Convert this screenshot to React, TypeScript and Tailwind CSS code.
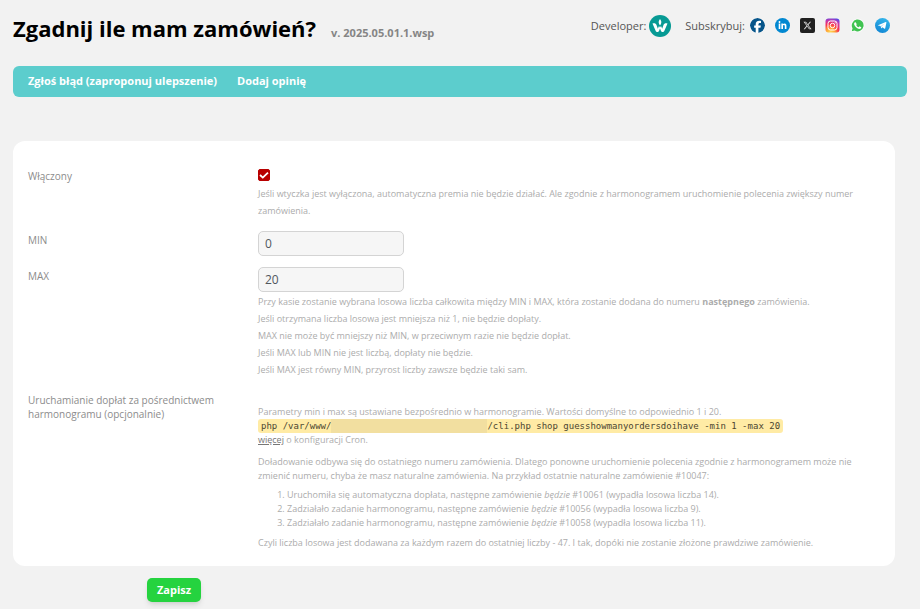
import type { ReactNode } from "react";
import { FaFacebook, FaLinkedinIn, FaXTwitter } from "react-icons/fa6";

function DeveloperLogo() {
  return (
    <svg viewBox="0 0 44 44" className="h-[22px] w-[22px]" aria-hidden="true">
      <circle cx="22" cy="22" r="22" fill="#079a94" />
      <path d="M7 17c4-1 7 0 8 3l4 11c-1 3-5 4-6 0z" fill="#fff" />
      <path d="M37 17c-4-1-7 0-8 3l-4 11c1 3 5 4 6 0z" fill="#fff" />
      <path d="M15 33l5-11 2 3 2-3 5 11c-2 2-4 1-5-1l-2-5-2 5c-1 2-3 3-5 1z" fill="#fff" />
      <path d="M22 8c3 4 4 7 0 13c-4-6-3-9 0-13z" fill="#fff" />
    </svg>
  );
}

function WhatsAppIcon() {
  return (
    <svg viewBox="0 0 30 30" className="h-[15px] w-[15px]" aria-hidden="true">
      <path d="M1 29l2-7.500A13.800 13.800 0 1 1 8.500 27z" fill="#fafafa" />
      <path d="M3.500 26.500l1.600-5.800A11.800 11.800 0 1 1 9.300 25z" fill="#40c351" />
      <path d="M11.500 8.800c-.4-.7-1.500-.7-2.100 0-2 2-1.500 4.700 1.300 8.200 3 3.700 7 5.700 9.700 4.600 1.700-.7 2.300-2 2-3.200l-3.300-1.700-1.700 1.900c-2.400-.8-4-2.300-5-4.500l1.200-1.700z" fill="#fff" />
    </svg>
  );
}

function InstagramIcon() {
  return (
    <svg viewBox="0 0 30 30" className="h-[15px] w-[15px]" fill="none" aria-hidden="true">
      <defs>
        <radialGradient id="ig" cx="0.350" cy="1" r="1.100">
          <stop offset="0" stopColor="#ffdd55" />
          <stop offset="0.300" stopColor="#ffa035" />
          <stop offset="0.550" stopColor="#f8304f" />
          <stop offset="0.780" stopColor="#c837ab" />
          <stop offset="1" stopColor="#4a4bea" />
        </radialGradient>
      </defs>
      <rect x="1" y="1" width="28" height="28" rx="6" fill="url(#ig)" />
      <rect x="6" y="6" width="18" height="18" rx="5" stroke="#fff" strokeWidth="2" />
      <circle cx="15" cy="15" r="4.500" stroke="#fff" strokeWidth="2" />
      <circle cx="20.300" cy="9.700" r="1.300" fill="#fff" />
    </svg>
  );
}

function TelegramIcon() {
  return (
    <svg viewBox="0 0 30 30" className="h-[15px] w-[15px]" aria-hidden="true">
      <defs>
        <linearGradient id="tg" x1="0.700" y1="0" x2="0.300" y2="1">
          <stop offset="0" stopColor="#35b5ea" />
          <stop offset="1" stopColor="#1287d4" />
        </linearGradient>
      </defs>
      <circle cx="15" cy="15" r="15" fill="url(#tg)" />
      <path d="M6 14.500L21.500 8c1-.4 1.500.1 1.300 1.100l-2.300 11.600c-.2 1-.9 1.200-1.700.7l-3.700-2.800-1.900 1.900c-.5.400-.9.300-1-.4l-.9-4-4.900-1c-.9-.2-.9-.4-.4-.6z" fill="#fff" />
      <path d="M11.300 16.100l7.900-4.900-6 6-.4 3z" fill="#b9dcf2" />
    </svg>
  );
}

function Social({ label, className, children }: { label: string; className?: string; children: ReactNode }) {
  return (
    <a href="#" aria-label={label} className={`flex h-[15px] w-[15px] items-center justify-center overflow-hidden ${className ?? ""}`}>
      {children}
    </a>
  );
}

function Row({ label, htmlFor, children, className, labelClassName }: { label: string; htmlFor?: string; children: ReactNode; className?: string; labelClassName?: string }) {
  const text = `pr-10 text-[10px] leading-[14px] text-[#8c8c8c] ${labelClassName ?? ""}`;
  return (
    <div className={`grid grid-cols-[230px_1fr] ${className ?? ""}`}>
      {htmlFor ? <label htmlFor={htmlFor} className={text}>{label}</label> : <div className={text}>{label}</div>}
      <div>{children}</div>
    </div>
  );
}

const inputClass =
  "block h-[25px] w-[146px] rounded-[5px] border border-[#d4d4d4] bg-[#f6f6f6] px-[6px] text-[12px] text-[#50575e] outline-none";

export default function App() {
  return (
    <div className="min-h-screen bg-[#f2f2f2] px-[13px] pb-[6px] font-['Open_Sans','Noto_Sans',sans-serif]">
      <header className="flex items-start justify-between pr-[17px]">
        <div className="flex items-baseline gap-[15px] pt-3">
          <h1 className="text-[22px] leading-8 font-bold text-black">Zgadnij ile mam zamówień?</h1>
          <span className="text-[11px] font-bold text-[#858585]">v. 2025.05.01.1.wsp</span>
        </div>
        <div className="flex items-center pt-[14px] text-[11px] leading-6 text-[#555]">
          <span>Developer:</span>
          <a href="#" aria-label="Developer" className="ml-[3px]"><DeveloperLogo /></a>
          <span className="ml-[14px]">Subskrybuj:</span>
          <div className="ml-[5px] flex gap-[10px] pb-[2px]">
            <Social label="Facebook" className="rounded-full bg-white"><FaFacebook className="h-[15px] w-[15px] text-[#07558a]" /></Social>
            <Social label="LinkedIn" className="rounded-full bg-[#0288d1]"><FaLinkedinIn className="h-[9px] w-[9px] text-white" /></Social>
            <Social label="X" className="rounded-[2px] bg-[#212121]"><FaXTwitter className="h-[9px] w-[9px] text-[#ddd]" /></Social>
            <Social label="Instagram"><InstagramIcon /></Social>
            <Social label="WhatsApp"><WhatsAppIcon /></Social>
            <Social label="Telegram"><TelegramIcon /></Social>
          </div>
        </div>
      </header>

      <nav className="mt-[22px] flex h-[31px] items-center gap-5 rounded-[6px] bg-[#5ccdcd] px-[15px] text-[11px] font-bold text-white">
        <a href="#">Zgłoś błąd (zaproponuj ulepszenie)</a>
        <a href="#">Dodaj opinię</a>
      </nav>

      <form className="mt-11 mr-3" onSubmit={(e) => e.preventDefault()}>
        <div className="rounded-xl bg-white px-[15px] pt-7 pb-4 text-[9px] leading-[14px] text-[#acacac]">
          <Row label="Włączony" htmlFor="enabled">
            <span className="relative block h-3 w-3">
              <input id="enabled" type="checkbox" defaultChecked className="peer block h-3 w-3 appearance-none rounded-[2px] border border-[#b80000] checked:bg-[#b80000]" />
              <svg viewBox="0 0 12 12" className="pointer-events-none absolute inset-0 hidden h-3 w-3 peer-checked:block" fill="none" stroke="#fff" strokeWidth="1.800" aria-hidden="true">
                <path d="M2 6l2.800 2.600L10 3.600" />
              </svg>
            </span>
            <p className="mt-1 leading-[17px]">
              Jeśli wtyczka jest wyłączona, automatyczna premia nie będzie działać. Ale zgodnie z harmonogramem uruchomienie polecenia zwiększy numer zamówienia.
            </p>
          </Row>
          <Row label="MIN" htmlFor="min" className="mt-3" labelClassName="pt-[2px]">
            <input id="min" type="text" defaultValue="0" className={inputClass} />
          </Row>
          <Row label="MAX" htmlFor="max" className="mt-[11px]" labelClassName="pt-[2px]">
            <input id="max" type="text" defaultValue="20" className={inputClass} />
            <div className="pt-px leading-[17px]">
              <p>Przy kasie zostanie wybrana losowa liczba całkowita między MIN i MAX, która zostanie dodana do numeru <strong>następnego</strong> zamówienia.</p>
              <p>Jeśli otrzymana liczba losowa jest mniejsza niż 1, nie będzie dopłaty.</p>
              <p>MAX nie może być mniejszy niż MIN, w przeciwnym razie nie będzie dopłat.</p>
              <p>Jeśli MAX lub MIN nie jest liczbą, dopłaty nie będzie.</p>
              <p>Jeśli MAX jest równy MIN, przyrost liczby zawsze będzie taki sam.</p>
            </div>
          </Row>
          <Row label="Uruchamianie dopłat za pośrednictwem harmonogramu (opcjonalnie)" className="mt-[15px]">
            <p className="pt-3">
              Parametry min i max są ustawiane bezpośrednio w harmonogramie. Wartości domyślne to odpowiednio 1 i 20.
            </p>
            <code className="flex w-fit items-center rounded-[3px] bg-[#ffeba5] px-[3px] font-['DejaVu_Sans_Mono',monospace] text-[9px] leading-[14px] whitespace-pre text-[#4b4530]">
              <span>php /var/www/</span>
              <span className="h-[14px] w-[156px] bg-[#f2dfa0]" />
              <span>/cli.php shop guesshowmanyordersdoihave -min 1 -max 20</span>
            </code>
            <p><a href="#" className="text-[#777] underline">więcej</a> o konfiguracji Cron.</p>
            <p className="mt-2">
              Doładowanie odbywa się do ostatniego numeru zamówienia. Dlatego ponowne uruchomienie polecenia zgodnie z harmonogramem może nie zmienić numeru, chyba że masz naturalne zamówienia. Na przykład ostatnie naturalne zamówienie #10047:
            </p>
            <ol className="mt-[5px] list-decimal pl-[29px]">
              <li>Uruchomiła się automatyczna dopłata, następne zamówienie <em>będzie</em> #10061 (wypadła losowa liczba 14).</li>
              <li>Zadziałało zadanie harmonogramu, następne zamówienie <em>będzie</em> #10056 (wypadła losowa liczba 9).</li>
              <li>Zadziałało zadanie harmonogramu, następne zamówienie <em>będzie</em> #10058 (wypadła losowa liczba 11).</li>
            </ol>
            <p className="mt-[6px]">
              Czyli liczba losowa jest dodawana za każdym razem do ostatniej liczby - 47. I tak, dopóki nie zostanie złożone prawdziwe zamówienie.
            </p>
          </Row>
        </div>
        <button type="submit" className="mt-3 ml-[134px] block h-6 rounded-[5px] bg-[#25d33f] px-[10px] text-[11px] font-bold text-white shadow-md">
          Zapisz
        </button>
      </form>
    </div>
  );
}
